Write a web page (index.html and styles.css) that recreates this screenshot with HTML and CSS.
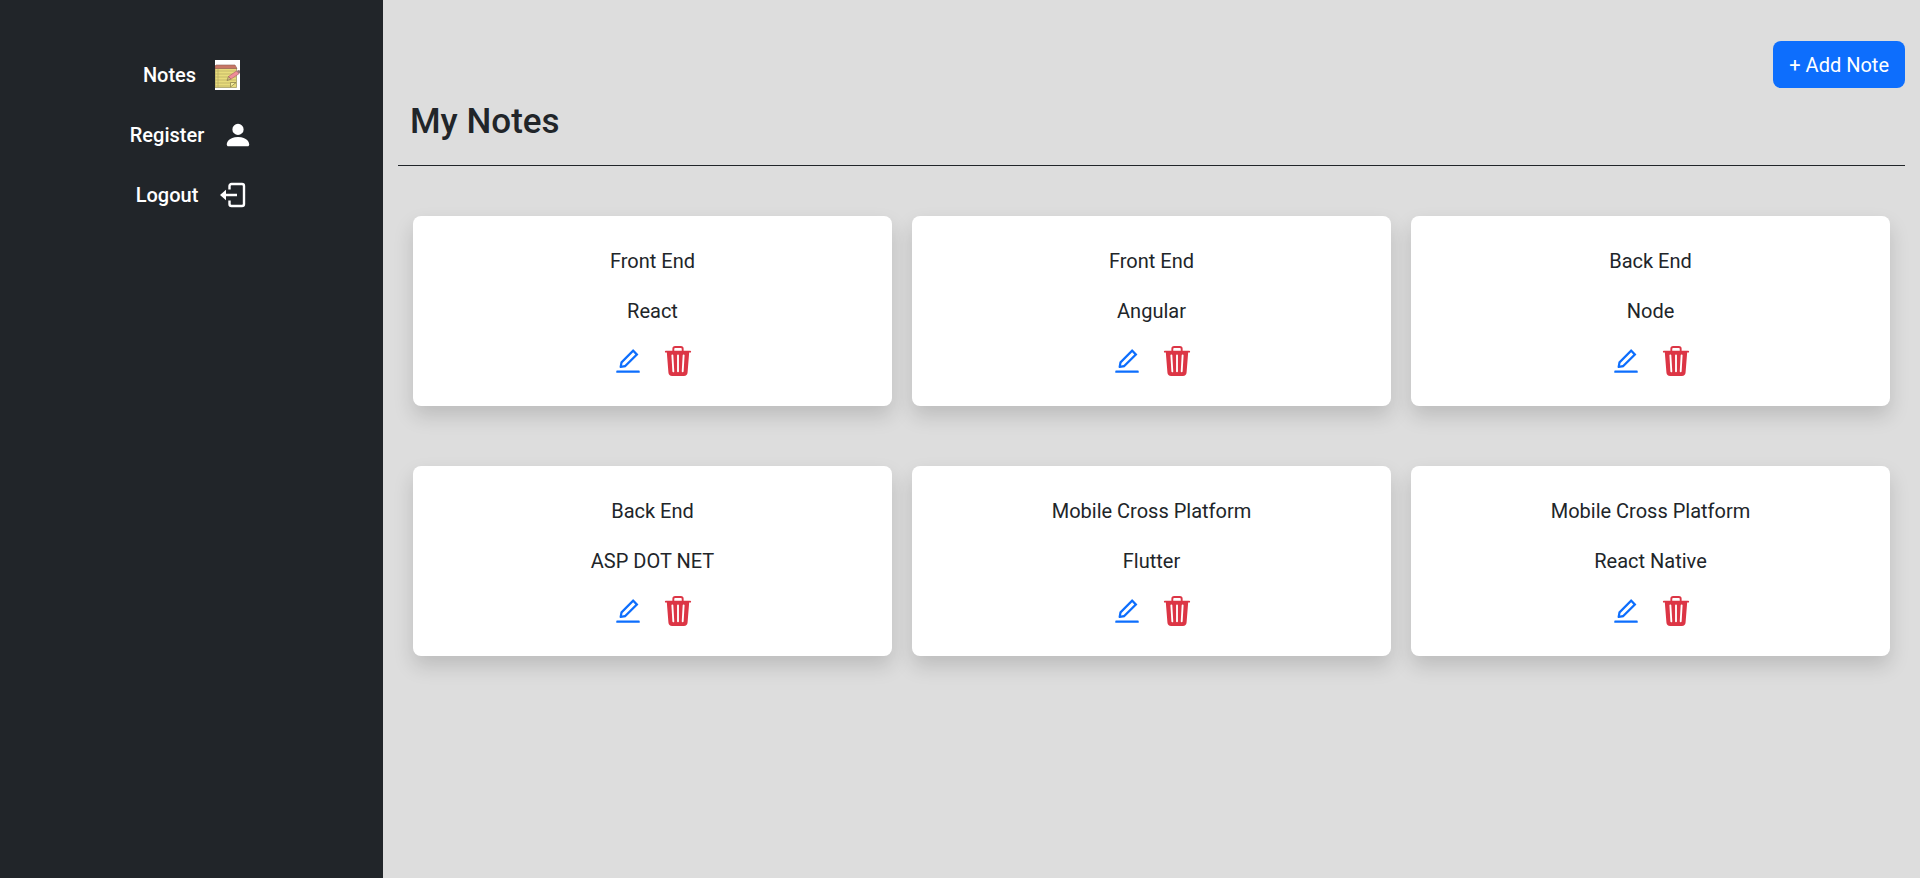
FILE: index.html
```html
<!DOCTYPE html>
<html lang="en">
<head>
<meta charset="utf-8">
<title>My Notes</title>
<link rel="stylesheet" href="styles.css">
</head>
<body>
<svg class="sprite" aria-hidden="true">
  <symbol id="edit" viewBox="0 0 1024 1024"><path d="M257.7 752c2 0 4-.2 6-.5L431.9 722c2-.4 3.9-1.3 5.3-2.8l423.9-423.9a9.96 9.96 0 0 0 0-14.1L694.9 114.9c-1.9-1.9-4.4-2.9-7.1-2.9s-5.2 1-7.1 2.9L256.8 538.8c-1.5 1.5-2.4 3.3-2.8 5.3l-29.5 168.2a33.5 33.5 0 0 0 9.4 29.8c6.6 6.4 14.9 9.9 23.8 9.9zm67.4-174.4L687.8 215l73.3 73.3-362.7 362.6-88.9 15.7 15.6-89zM880 836H144c-17.7 0-32 14.3-32 32v36c0 4.4 3.6 8 8 8h784c4.4 0 8-3.6 8-8v-36c0-17.7-14.3-32-32-32z"/></symbol>
  <symbol id="trash" viewBox="0 0 16 16"><path d="M11 1.5v1h3.5a.5.5 0 0 1 0 1h-.538l-.853 10.66A2 2 0 0 1 11.115 16h-6.23a2 2 0 0 1-1.994-1.84L2.038 3.5H1.5a.5.5 0 0 1 0-1H5v-1A1.5 1.5 0 0 1 6.5 0h3A1.5 1.5 0 0 1 11 1.5Zm-5 0v1h4v-1a.5.5 0 0 0-.5-.5h-3a.5.5 0 0 0-.5.5ZM4.5 5.029l.5 8.5a.5.5 0 1 0 .998-.06l-.5-8.5a.5.5 0 1 0-.998.06Zm6.53-.528a.5.5 0 0 0-.528.47l-.5 8.5a.5.5 0 0 0 .998.058l.5-8.5a.5.5 0 0 0-.47-.528ZM8 4.5a.5.5 0 0 0-.5.5v8.5a.5.5 0 0 0 1 0V5a.5.5 0 0 0-.5-.5Z"/></symbol>
</svg>
<div class="layout">
  <nav class="sidebar">
    <a class="nav-link" href="#notes">Notes
      <svg class="notepad" viewBox="0 0 25 30" aria-hidden="true">
        <rect width="25" height="30" fill="#fff"/>
        <path d="M0 8h21.500v19.500H0z" fill="#e8dc7c" stroke="#a39c62" stroke-width=".8"/>
        <path d="M1 5h19l2 3.500H0V6z" fill="#c87565" stroke="#8e5e52" stroke-width=".6"/>
        <path d="M0 11h21M0 14h21M0 17h21M0 20h21M0 23h21M0 26h15M3 9v18" stroke="#b5a961" stroke-width=".7"/>
        <path d="M15.500 27v-4.500h5.500z" fill="#f4ec9e" stroke="#8f874e" stroke-width=".8"/>
        <path d="m12 20.500 1.500-4 2.500 2.600z" fill="#d8bd82" stroke="#776747" stroke-width=".6"/>
        <path d="m13.500 16.500 8-5.500 2.500 2.700-8 5.400z" fill="#f08c99" stroke="#a75d69" stroke-width=".6"/>
        <path d="m21.500 11 2-1 1.500.5v2.200l-1 1z" fill="#9b777a"/>
      </svg>
    </a>
    <a class="nav-link" href="#register">Register
      <svg class="icon" viewBox="0 0 16 16" aria-hidden="true"><path d="M3 14s-1 0-1-1 1-4 6-4 6 3 6 4-1 1-1 1H3Zm5-6a3 3 0 1 0 0-6 3 3 0 0 0 0 6Z"/></svg>
    </a>
    <a class="nav-link" href="#logout">Logout
      <svg class="icon" viewBox="0 0 30 30" aria-hidden="true"><path d="M12.500 9.500V6a2 2 0 0 1 2-2H25a2 2 0 0 1 2 2v18a2 2 0 0 1-2 2H14.500a2 2 0 0 1-2-2v-3.500M8 15h12" fill="none" stroke="currentColor" stroke-width="2.400"/><path d="M3 15l6-5.300v10.600z"/></svg>
    </a>
  </nav>
  <main class="content">
    <button class="add-button" type="button">+ Add Note</button>
    <h1 class="title">My Notes</h1>
    <hr class="divider">
    <section class="notes">
      <article class="card"><p>Front End</p><p>React</p><div class="actions"><button class="action edit" type="button" aria-label="Edit"><svg class="icon"><use href="#edit"/></svg></button><button class="action delete" type="button" aria-label="Delete"><svg class="icon"><use href="#trash"/></svg></button></div></article>
      <article class="card"><p>Front End</p><p>Angular</p><div class="actions"><button class="action edit" type="button" aria-label="Edit"><svg class="icon"><use href="#edit"/></svg></button><button class="action delete" type="button" aria-label="Delete"><svg class="icon"><use href="#trash"/></svg></button></div></article>
      <article class="card"><p>Back End</p><p>Node</p><div class="actions"><button class="action edit" type="button" aria-label="Edit"><svg class="icon"><use href="#edit"/></svg></button><button class="action delete" type="button" aria-label="Delete"><svg class="icon"><use href="#trash"/></svg></button></div></article>
      <article class="card"><p>Back End</p><p>ASP DOT NET</p><div class="actions"><button class="action edit" type="button" aria-label="Edit"><svg class="icon"><use href="#edit"/></svg></button><button class="action delete" type="button" aria-label="Delete"><svg class="icon"><use href="#trash"/></svg></button></div></article>
      <article class="card"><p>Mobile Cross Platform</p><p>Flutter</p><div class="actions"><button class="action edit" type="button" aria-label="Edit"><svg class="icon"><use href="#edit"/></svg></button><button class="action delete" type="button" aria-label="Delete"><svg class="icon"><use href="#trash"/></svg></button></div></article>
      <article class="card"><p>Mobile Cross Platform</p><p>React Native</p><div class="actions"><button class="action edit" type="button" aria-label="Edit"><svg class="icon"><use href="#edit"/></svg></button><button class="action delete" type="button" aria-label="Delete"><svg class="icon"><use href="#trash"/></svg></button></div></article>
    </section>
  </main>
</div>
</body>
</html>
```
FILE: styles.css
```css
*, *::before, *::after { box-sizing: border-box; }
body {
  margin: 0;
  background: #ddd;
  color: #212529;
  font: 400 20px/30px Roboto, sans-serif;
}
.sprite { display: none; }
.layout {
  display: grid;
  grid-template-columns: 383fr 1537fr;
  min-height: 100vh;
}
.sidebar {
  display: flex;
  flex-direction: column;
  align-items: center;
  gap: 30px;
  padding-top: 60px;
  background: #212529;
}
.nav-link {
  display: flex;
  align-items: center;
  gap: 19px;
  color: #fff;
  font-weight: 500;
  text-decoration: none;
}
.icon {
  display: block;
  width: 30px;
  height: 30px;
  fill: currentColor;
}
.notepad { width: 25px; height: 30px; }
.content {
  display: flex;
  flex-direction: column;
  padding: 41px 15px;
}
.add-button {
  align-self: flex-end;
  padding: 9px 16px 8px;
  border: 0;
  border-radius: 8px;
  background: #0d6efd;
  color: #fff;
  font: inherit;
}
.title {
  margin: 13px 12px 22px;
  font-size: 35px;
  font-weight: 500;
  line-height: 42px;
}
.divider {
  width: 100%;
  margin: 0;
  border: 0;
  border-top: 1px solid #212529;
}
.notes {
  display: grid;
  grid-template-columns: repeat(3, 1fr);
  gap: 60px 20px;
  padding: 50px 15px 0;
}
.card {
  padding: 30px 20px;
  border-radius: 8px;
  background: #fff;
  box-shadow: 0 10px 20px rgba(0, 0, 0, .15);
  text-align: center;
}
.card p { margin: 0 0 20px; }
.actions {
  display: flex;
  justify-content: center;
  gap: 20px;
}
.action {
  padding: 0;
  border: 0;
  background: none;
}
.edit { color: #0d6efd; }
.delete { color: #dc3545; }
```
